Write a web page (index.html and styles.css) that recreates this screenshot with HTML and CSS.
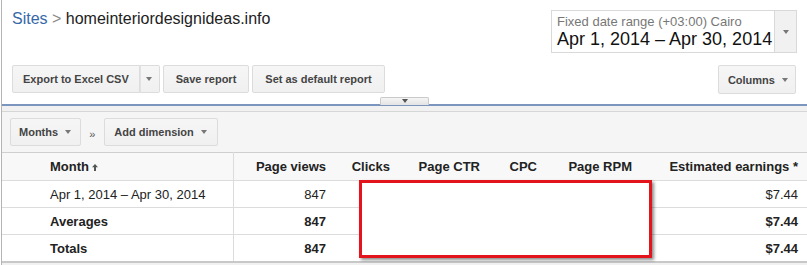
FILE: index.html
```html
<!DOCTYPE html>
<html lang="en">
<head>
    <meta charset="UTF-8">
    <meta name="viewport" content="width=device-width, initial-scale=1.0">
    <title>Performance reports</title>
    <link rel="stylesheet" href="styles.css">
</head>
<body>
    <div class="page">
        <div class="top">
            <div class="crumbs"><a class="crumb-link" href="#">Sites</a> <span class="crumb-sep">&gt;</span> homeinteriordesignideas.info</div>
            <div class="range">
                <div class="range-text">
                    <div class="range-label">Fixed date range (+03:00) Cairo</div>
                    <div class="range-dates">Apr 1, 2014 – Apr 30, 2014</div>
                </div>
                <div class="range-drop"><span class="caret"></span></div>
            </div>
        </div>

        <div class="toolbar">
            <div class="tools">
                <div class="split">
                    <button class="btn btn-export">Export to Excel CSV</button>
                    <button class="btn btn-arrow"><span class="caret"></span></button>
                </div>
                <button class="btn">Save report</button>
                <button class="btn">Set as default report</button>
            </div>
            <button class="btn btn-columns">Columns <span class="caret"></span></button>
        </div>

        <div class="divider"><span class="handle"><span class="caret caret-dark"></span></span></div>

        <div class="dims">
            <button class="btn btn-dim">Months <span class="caret"></span></button>
            <span class="dim-sep">»</span>
            <button class="btn btn-add">Add dimension <span class="caret"></span></button>
        </div>

        <div class="report">
            <table class="stats">
                <colgroup>
                    <col class="c-month">
                    <col class="c-views">
                    <col class="c-clicks">
                    <col class="c-ctr">
                    <col class="c-cpc">
                    <col class="c-rpm">
                    <col class="c-earn">
                </colgroup>
                <thead>
                    <tr>
                        <th class="first">Month <svg class="sort" width="6" height="7" viewBox="0 0 6 7"><path d="M3 0 L6 3.2 H4 V7 H2 V3.2 H0 Z" fill="#555"/></svg></th>
                        <th>Page views</th>
                        <th>Clicks</th>
                        <th>Page CTR</th>
                        <th>CPC</th>
                        <th>Page RPM</th>
                        <th>Estimated earnings *</th>
                    </tr>
                </thead>
                <tbody>
                    <tr>
                        <td class="first">Apr 1, 2014 – Apr 30, 2014</td>
                        <td>847</td>
                        <td></td>
                        <td></td>
                        <td></td>
                        <td></td>
                        <td>$7.44</td>
                    </tr>
                    <tr class="sum">
                        <td class="first">Averages</td>
                        <td>847</td>
                        <td></td>
                        <td></td>
                        <td></td>
                        <td></td>
                        <td>$7.44</td>
                    </tr>
                    <tr class="sum">
                        <td class="first">Totals</td>
                        <td>847</td>
                        <td></td>
                        <td></td>
                        <td></td>
                        <td></td>
                        <td>$7.44</td>
                    </tr>
                </tbody>
            </table>
            <div class="redact"></div>
        </div>
    </div>
</body>
</html>
```

FILE: styles.css
```css
body {
    margin: 0;
    font-family: "Liberation Sans", Arial, sans-serif;
    color: #222;
    background: #fff;
}
.page {
    margin-left: 1px;
    border-left: 1px solid #b4b4b4;
    min-height: 100vh;
    background: #f1f1f1;
}
.top {
    display: flex;
    justify-content: space-between;
    align-items: flex-start;
    padding: 10px 10px 0 10px;
    background: #fff;
}
.crumbs {
    font-size: 16px;
    line-height: 18px;
    color: #222;
}
.crumb-link {
    color: #3768a9;
    text-decoration: none;
}
.crumb-sep {
    color: #888;
}
.range {
    display: flex;
    width: 246px;
    height: 43px;
    box-sizing: border-box;
    border: 1px solid #d9d9d9;
}
.range-text {
    flex: 1;
    padding: 3px 0 0 5px;
}
.range-label {
    font-size: 13px;
    line-height: 15px;
    color: #777;
}
.range-dates {
    font-size: 18px;
    line-height: 21px;
    color: #111;
}
.range-drop {
    width: 21px;
    border-left: 1px solid #d9d9d9;
    background: #f1f1f1;
    display: flex;
    justify-content: center;
    align-items: center;
}
.caret {
    display: inline-block;
    width: 0;
    height: 0;
    border-top: 4px solid #777;
    border-left: 3.5px solid transparent;
    border-right: 3.5px solid transparent;
    vertical-align: middle;
}
.caret-dark {
    border-top-color: #555;
}
.toolbar {
    display: flex;
    justify-content: space-between;
    padding: 12px 11px 10px 10px;
    background: #fff;
}
.tools {
    display: flex;
    gap: 3px;
}
.split {
    display: flex;
}
.btn {
    height: 28px;
    box-sizing: border-box;
    border: 1px solid #dcdcdc;
    border-radius: 2px;
    background: linear-gradient(#f6f6f6, #f0f0f0);
    color: #444;
    font-family: "Liberation Sans", Arial, sans-serif;
    font-size: 11px;
    font-weight: bold;
    padding: 0 12px;
    margin: 0;
    cursor: pointer;
}
.btn .caret {
    margin-left: 4px;
    margin-top: -2px;
}
.btn-export {
    padding: 0 10px;
    border-radius: 2px 0 0 2px;
}
.btn-arrow {
    width: 20px;
    padding: 0;
    border-left: none;
    border-radius: 0 2px 2px 0;
    box-shadow: inset 1px 0 0 #e2e2e2;
}
.btn-arrow .caret {
    margin-left: 0;
}
.btn-columns {
    padding: 0 7px 0 9px;
    height: 29px;
}
.divider {
    position: relative;
    height: 2px;
    background: #7b95bf;
}
.handle {
    position: absolute;
    left: 378px;
    top: -7px;
    width: 49px;
    height: 8px;
    box-sizing: border-box;
    border: 1px solid #cacaca;
    border-bottom: none;
    border-radius: 2px 2px 0 0;
    background: linear-gradient(#f5f5f5, #e3e3e3);
    display: flex;
    justify-content: center;
    align-items: flex-start;
    padding-top: 1px;
}
.dims {
    display: flex;
    align-items: center;
    margin-top: 5px;
    border-top: 1px solid #d6d6d6;
    background: #f5f5f5;
    padding: 6px 8px 6px 8px;
}
.btn-dim {
    padding: 0 9px 0 8px;
}
.btn-add {
    padding: 0 10px 0 9px;
}
.dim-sep {
    font-size: 11px;
    color: #555;
    margin: 4px 9px 0 8px;
}
.report {
    position: relative;
    padding-bottom: 4px;
}
.stats {
    width: 805px;
    table-layout: fixed;
    border-collapse: collapse;
    background: #fff;
    border-top: 1px solid #cfcfcf;
    border-bottom: 2px solid #c8c8c8;
}
.c-month { width: 231px; }
.c-views { width: 102px; }
.c-clicks { width: 64px; }
.c-ctr { width: 90px; }
.c-cpc { width: 57px; }
.c-rpm { width: 95px; }
.c-earn { width: 166px; }
.stats th {
    height: 27px;
    font-size: 13px;
    font-weight: bold;
    color: #222;
    text-align: right;
    padding: 0 9px 0 0;
    background: #f8f8f8;
    border-bottom: 1px solid #dcdcdc;
}
.stats td {
    height: 26px;
    font-size: 13px;
    color: #222;
    text-align: right;
    padding: 0 9px 0 0;
    border-bottom: 1px solid #dcdcdc;
}
.stats tbody tr:last-child td {
    border-bottom: none;
}
.stats .first {
    text-align: left;
    padding-left: 48px;
    border-right: 1px solid #dcdcdc;
}
.sort {
    margin-left: -1px;
    vertical-align: 0;
}
.sum td {
    font-weight: bold;
}
.redact {
    position: absolute;
    left: 357px;
    top: 28px;
    width: 293px;
    height: 78px;
    box-sizing: border-box;
    border: 3px solid #e3141b;
    background: #fff;
    box-shadow: 2px 2px 3px rgba(0, 0, 0, 0.45);
}
```
